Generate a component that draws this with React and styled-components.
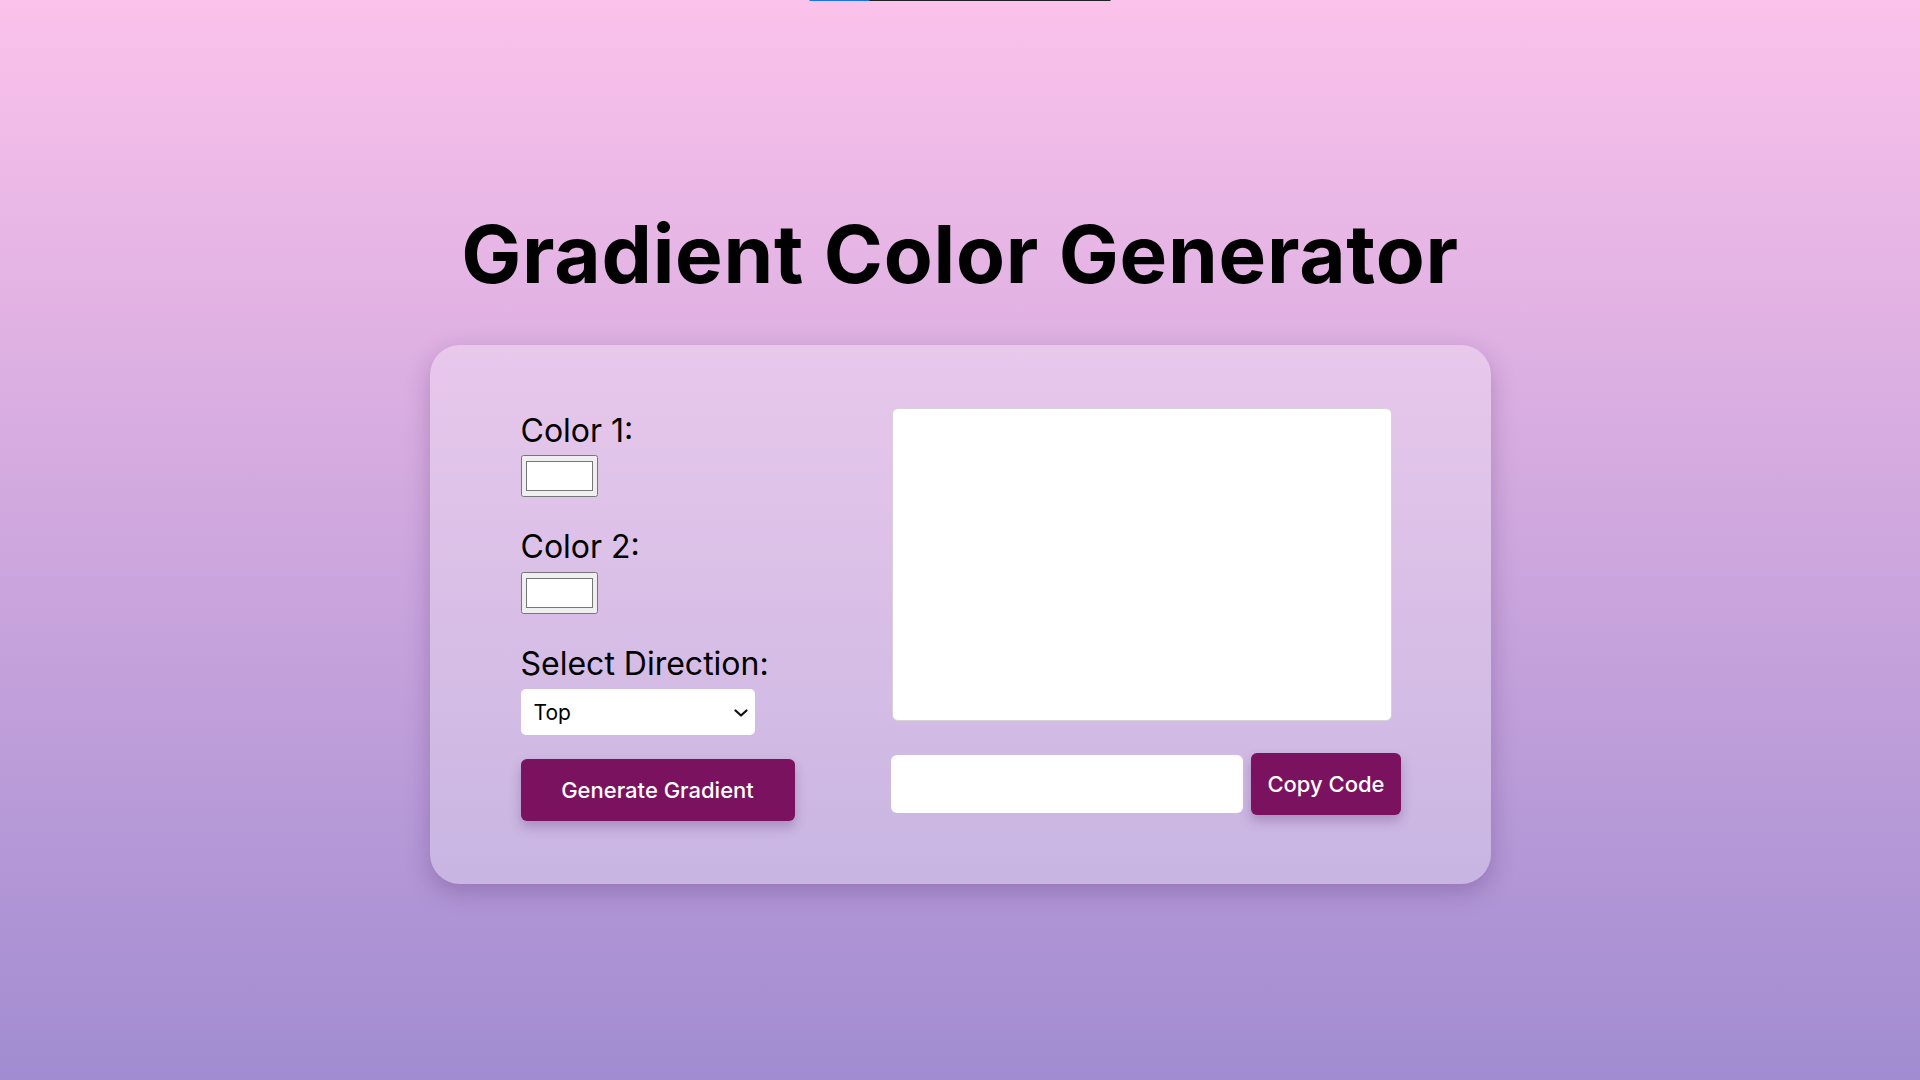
import React from "react";
import styled, { createGlobalStyle } from "styled-components";

const GlobalStyle = createGlobalStyle`
  * {
    box-sizing: border-box;
  }

  body {
    margin: 0;
    min-height: 100vh;
    font-family: "Inter", "Open Sans", sans-serif;
    background: linear-gradient(to bottom, #fbc2eb 0%, #a18cd1 100%);
    background-attachment: fixed;
  }
`;

const TopLine = styled.div`
  position: fixed;
  top: 0;
  left: 50%;
  transform: translateX(-50%);
  width: 301px;
  height: 1px;
  background: linear-gradient(to right, #1a73e8 0 60px, #202124 60px 100%);
`;

const Page = styled.main`
  min-height: 100vh;
  display: flex;
  flex-direction: column;
  align-items: center;
  padding-top: 204px;
`;

const Title = styled.h1`
  margin: 0 0 41px;
  font-size: 80px;
  line-height: 100px;
  font-weight: 700;
  letter-spacing: 0.75px;
  color: #000;
`;

const Card = styled.section`
  width: 1061px;
  display: flex;
  align-items: flex-start;
  gap: 96px;
  padding: 63px 90px 63px 91px;
  border-radius: 30px;
  background: rgba(255, 255, 255, 0.3);
  box-shadow: 0 8px 24px rgba(60, 20, 80, 0.25);
`;

const Controls = styled.div`
  width: 274px;
  display: flex;
  flex-direction: column;
  align-items: flex-start;
`;

const Label = styled.label`
  display: block;
  font-size: 32px;
  line-height: 38px;
  font-weight: 400;
  color: #000;
  margin: ${(p) => (p.$first ? "4px 0 5px" : "31px 0 6px")};
`;

const ColorInput = styled.input.attrs({ type: "color" })`
  width: 77px;
  height: 42px;
  margin: 0;
  cursor: pointer;
`;

const SelectWrap = styled.div`
  position: relative;
  width: 234px;
  height: 46px;
`;

const Select = styled.select`
  appearance: none;
  width: 100%;
  height: 100%;
  padding: 0 36px 0 13px;
  border: none;
  border-radius: 5px;
  background: #fff;
  font-family: inherit;
  font-size: 21px;
  color: #000;
  outline: none;
`;

const Chevron = styled.svg`
  position: absolute;
  right: 7px;
  top: 20px;
  width: 14px;
  height: 8px;
  pointer-events: none;
`;

const Button = styled.button`
  height: 62px;
  width: ${(p) => (p.$width ? `${p.$width}px` : "auto")};
  padding: 0 16px;
  border: none;
  border-radius: 6px;
  background: #7a1260;
  color: #fff;
  font-family: inherit;
  font-size: 22px;
  font-weight: 500;
  box-shadow: 0 6px 12px rgba(60, 20, 80, 0.25);
  cursor: pointer;
  margin-top: ${(p) => p.$top || 0}px;
`;

const Output = styled.div`
  width: 510px;
  display: flex;
  flex-direction: column;
  gap: 32px;
`;

const Preview = styled.div`
  width: 500px;
  height: 313px;
  margin-left: 1px;
  background: #fff;
  border: 1px solid #d8d2d6;
  border-radius: 6px;
`;

const CodeRow = styled.div`
  display: flex;
  align-items: center;
  gap: 8px;
`;

const CodeInput = styled.input`
  width: 353px;
  height: 58px;
  border: none;
  border-radius: 6px;
  background: #fff;
  padding: 0 14px;
  font-family: inherit;
  font-size: 18px;
  outline: none;
`;

export default function App() {
  return (
    <>
      <GlobalStyle />
      <TopLine />
      <Page>
        <Title>Gradient Color Generator</Title>
        <Card>
          <Controls>
            <Label $first htmlFor="c1">Color 1:</Label>
            <ColorInput id="c1" defaultValue="#ffffff" />
            <Label htmlFor="c2">Color 2:</Label>
            <ColorInput id="c2" defaultValue="#ffffff" />
            <Label htmlFor="dir">Select Direction:</Label>
            <SelectWrap>
              <Select id="dir" defaultValue="top">
                <option value="top">Top</option>
                <option value="bottom">Bottom</option>
                <option value="left">Left</option>
                <option value="right">Right</option>
              </Select>
              <Chevron viewBox="0 0 14 8" fill="none">
                <polyline
                  points="1.5,1.5 7,6.5 12.5,1.5"
                  stroke="#111"
                  strokeWidth="2.2"
                  strokeLinecap="round"
                  strokeLinejoin="round"
                />
              </Chevron>
            </SelectWrap>
            <Button $width={274} $top={24}>
              Generate Gradient
            </Button>
          </Controls>
          <Output>
            <Preview />
            <CodeRow>
              <CodeInput type="text" readOnly />
              <Button>Copy Code</Button>
            </CodeRow>
          </Output>
        </Card>
      </Page>
    </>
  );
}
